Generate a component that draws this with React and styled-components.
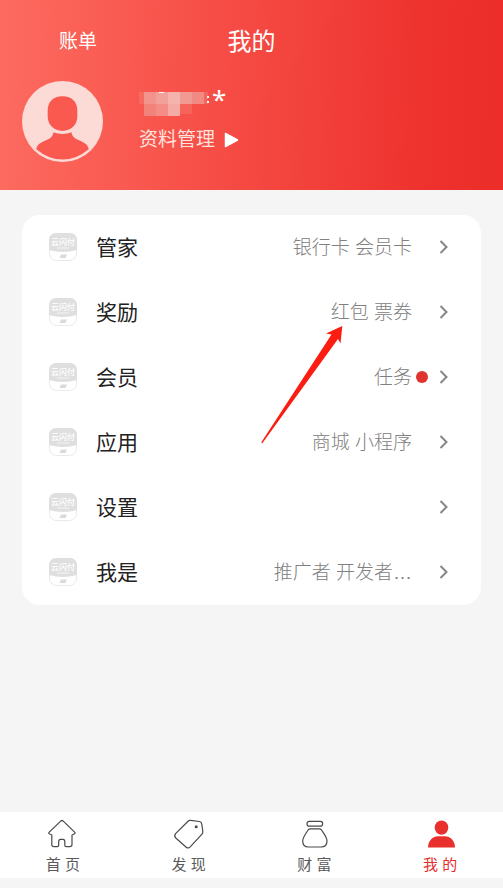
import React from "react";
import styled, { createGlobalStyle } from "styled-components";

const GlobalStyle = createGlobalStyle`
  * {
    box-sizing: border-box;
  }

  body {
    margin: 0;
    background-color: #f5f5f5;
    font-family: "Liberation Sans", "Noto Sans CJK SC", sans-serif;
  }

  a {
    color: inherit;
    text-decoration: none;
  }
`;

const Page = styled.div`
  display: flex;
  flex-direction: column;
  min-height: 100vh;
  padding-bottom: 10px;
`;

const Header = styled.header`
  padding: 23px 22px 28px;
  color: #fff;
  background: linear-gradient(92deg, #fd6b60 0%, #f54a43 48%, #ee322e 84%, #ec2d2a 100%);
`;

const TitleBar = styled.div`
  display: grid;
  grid-template-columns: 1fr auto 1fr;
  align-items: center;
  height: 37px;
`;

const BillLink = styled.a`
  padding-left: 37px;
  font-size: 19px;
  line-height: 28px;
`;

const Title = styled.h1`
  margin: 0;
  font-size: 24px;
  font-weight: 400;
  line-height: 36px;
`;

const Profile = styled.div`
  display: flex;
  align-items: center;
  gap: 36px;
  margin-top: 21px;
`;

const Avatar = styled.svg`
  width: 81px;
  height: 81px;
  flex-shrink: 0;
`;

const Account = styled.div`
  display: flex;
  flex-direction: column;
  align-items: flex-start;
  gap: 8px;
`;

const MaskedName = styled.div`
  display: flex;
  align-items: flex-start;
  height: 28px;
  padding-top: 3px;
`;

const Mosaic = styled.svg`
  width: 70px;
  height: 24px;
`;

const Stars = styled.span`
  margin-left: 3px;
  font-family: "Noto Sans", sans-serif;
  font-size: 26px;
  line-height: 14px;
`;

const ManageLink = styled.a`
  display: flex;
  align-items: center;
  gap: 9px;
  color: #ffe3df;
  font-size: 19px;
  line-height: 30px;
`;

const Card = styled.main`
  position: relative;
  margin: 25px 22px 24px;
  border-radius: 18px;
  background-color: #fff;
`;

const Row = styled.a`
  display: flex;
  align-items: center;
  height: 65px;
  padding: 0 31px 1px 27px;
`;

const RowLabel = styled.span`
  margin-left: 19px;
  padding-top: 2px;
  color: #222;
  font-size: 21px;
  line-height: 32px;
`;

const RowValue = styled.span`
  flex: 1;
  min-width: 0;
  padding-top: 2px;
  color: #808080;
  font-size: 19px;
  font-weight: 300;
  line-height: 28px;
  text-align: right;
  white-space: nowrap;
`;

const DotSlot = styled.span`
  display: flex;
  justify-content: center;
  width: 20px;
`;

const Dot = styled.span`
  width: 12px;
  height: 12px;
  border-radius: 50%;
  background-color: #e0322e;
`;

const Chevron = styled.svg`
  width: 12px;
  height: 16px;
  margin-left: 6px;
`;

const Pointer = styled.svg`
  position: absolute;
  top: 110px;
  right: 137px;
  width: 84px;
  height: 120px;
  pointer-events: none;
`;

const TabBar = styled.nav`
  display: grid;
  grid-template-columns: repeat(4, 1fr);
  height: 66px;
  margin-top: auto;
  background-color: #fff;
`;

const Tab = styled.a`
  display: flex;
  flex-direction: column;
  align-items: center;
  padding-top: 6px;
  color: ${(props) => (props.$active ? "#e2302d" : "#5a5a5a")};
  font-size: 15px;
  line-height: 24px;

  svg {
    width: 32px;
    height: 32px;
    margin-bottom: 3px;
  }
`;

const rows = [
  { label: "管家", value: "银行卡 会员卡" },
  { label: "奖励", value: "红包 票券" },
  { label: "会员", value: "任务", dot: true },
  { label: "应用", value: "商城 小程序" },
  { label: "设置", value: "" },
  { label: "我是", value: "推广者 开发者…" },
];

const outline = {
  fill: "none",
  stroke: "#4a4a4a",
  strokeWidth: 1.2,
  strokeLinejoin: "round",
  strokeLinecap: "round",
};

const tabs = [
  {
    label: "首 页",
    icon: (
      <path
        {...outline}
        d="M13.7 3.1 2 14.4Q1.3 15.3 2.2 15.8L4.8 17V26.5Q4.8 28.7 7 28.7H10.3Q11.7 28.7 11.7 27.3V23.5Q11.7 21.4 13.5 21.4H16Q17.8 21.4 17.8 23.5V27.3Q17.8 28.7 19.2 28.7H22.8Q25 28.7 25 26.5V17L27.6 15.8Q28.5 15.3 27.8 14.4L16.3 3.1Q15 1.9 13.7 3.1Z"
      />
    ),
  },
  {
    label: "发 现",
    icon: (
      <>
        <path
          {...outline}
          d="M17.5 2.4 26.5 3.5Q28.5 4 28.8 6.2L29.8 13.5Q29.9 15 29 16.2L17.2 28.9Q15.2 30.9 13.2 29.2L2.8 20Q.8 18 2.6 15.7L14.8 3.5Q15.9 2.2 17.5 2.4Z"
        />
        <circle cx="23.2" cy="8.7" r="1.5" fill="#4a4a4a" />
      </>
    ),
  },
  {
    label: "财 富",
    icon: (
      <>
        <rect {...outline} x="9" y="3.3" width="15.6" height="4.8" rx="2.2" />
        <path
          {...outline}
          d="M12.2 10.8H21.4Q22.7 10.8 23.5 12C25.7 15.5 29 19.2 29 23Q29 29 23.2 29H10.4Q4.7 29 4.7 23C4.7 19.2 7.9 15.5 10.1 12Q10.9 10.8 12.2 10.8Z"
        />
      </>
    ),
  },
  {
    label: "我 的",
    active: true,
    icon: (
      <g fill="#ea302d">
        <ellipse cx="17.5" cy="9.6" rx="6.8" ry="7.2" />
        <path d="M4 29.6C4 22.5 9 18.2 13.8 18.2H21.2C26 18.2 31 22.5 31 29.6Z" />
      </g>
    ),
  },
];

const AppBadge = () => (
  <svg width="28" height="28" viewBox="0 0 28 28" aria-hidden="true">
    <rect x="0.5" y="0.5" width="27" height="27" rx="7" fill="#fff" stroke="#e9e9e9" />
    <path d="M0 17V7.5Q0 0 7.5 0H20.5Q28 0 28 7.5V17Q14 21 0 17Z" fill="#dfdfdf" />
    <text x="14" y="12" textAnchor="middle" fontSize="8" fontWeight="500" fill="#fff">
      云闪付
    </text>
    <path d="M8 15H20" stroke="#efefef" strokeWidth="1.4" />
    <path d="M12 21.5H18L16.5 25H10.5Z" fill="#dadada" />
  </svg>
);

const App = () => {
  return (
    <>
      <GlobalStyle />
      <Page>
        <Header>
          <TitleBar>
            <BillLink href="#bill">账单</BillLink>
            <Title>我的</Title>
          </TitleBar>
          <Profile>
            <Avatar viewBox="0 0 82 82" role="img" aria-label="头像">
              <circle cx="41" cy="41" r="41" fill="#fcdad6" />
              <path
                fill="#f9594f"
                d="M41 15.5C50.5 15.5 56 21.5 56 30V36C56 44.5 49.5 50.5 41 50.5S26 44.5 26 36V30C26 21.5 31.5 15.5 41 15.5Z"
              />
              <path
                fill="#f9594f"
                d="M32 52C37.5 54.2 44.5 54.2 50 52Q51 57.5 56.5 59.5C63 62 67 64.5 67.5 69Q55 79.5 41 79.5T14.5 69C15 64.5 19 62 25.5 59.5Q31 57.5 32 52Z"
              />
            </Avatar>
            <Account>
              <MaskedName>
                <Mosaic viewBox="0 0 70 24" aria-hidden="true" shapeRendering="crispEdges">
                  <rect x="0" y="0" width="5" height="12" fill="#f66a61" />
                  <rect x="5" y="0" width="12" height="12" fill="#f2938d" />
                  <rect x="17" y="0" width="12" height="12" fill="#f1a09a" />
                  <rect x="29" y="0" width="12" height="12" fill="#f5b3ae" />
                  <rect x="41" y="0" width="12" height="12" fill="#f09a94" />
                  <rect x="53" y="0" width="12" height="12" fill="#f08a83" />
                  <rect x="65" y="0" width="4" height="12" fill="#f2665f" />
                  <rect x="5" y="12" width="12" height="12" fill="#f2837b" />
                  <rect x="17" y="12" width="12" height="12" fill="#f38d86" />
                  <rect x="29" y="12" width="12" height="12" fill="#f5aba5" />
                  <rect x="41" y="12" width="12" height="10" fill="#f5635a" />
                  <rect x="20" y="0" width="5" height="1" fill="#fff" />
                  <rect x="68" y="4" width="2" height="2" fill="#fff" />
                  <rect x="68" y="9" width="2" height="2" fill="#fff" />
                </Mosaic>
                <Stars>*</Stars>
              </MaskedName>
              <ManageLink href="#profile">
                资料管理
                <svg width="15" height="16" viewBox="0 0 15 16" aria-hidden="true">
                  <path d="M1.5 1.5 13.5 8 1.5 14.5Z" fill="#fff" stroke="#fff" strokeWidth="1.5" strokeLinejoin="round" />
                </svg>
              </ManageLink>
            </Account>
          </Profile>
        </Header>

        <Card>
          {rows.map((row) => (
            <Row key={row.label} href="#">
              <AppBadge />
              <RowLabel>{row.label}</RowLabel>
              <RowValue>{row.value}</RowValue>
              <DotSlot>{row.dot && <Dot />}</DotSlot>
              <Chevron viewBox="0 0 12 16" aria-hidden="true">
                <path d="M2.5 2 8.5 8 2.5 14" fill="none" stroke="#868686" strokeWidth="2" />
              </Chevron>
            </Row>
          ))}
          <Pointer viewBox="0 0 84 120" aria-hidden="true">
            <path d="M82.3 1 66 8.5 71.5 9.5 1.2 117.6 2.3 118.3 78 14 80.5 18.5Z" fill="#fb1d12" />
          </Pointer>
        </Card>

        <TabBar>
          {tabs.map((tab) => (
            <Tab key={tab.label} href="#" $active={tab.active}>
              <svg viewBox="0 0 32 32" aria-hidden="true">{tab.icon}</svg>
              {tab.label}
            </Tab>
          ))}
        </TabBar>
      </Page>
    </>
  );
};

export default App;
